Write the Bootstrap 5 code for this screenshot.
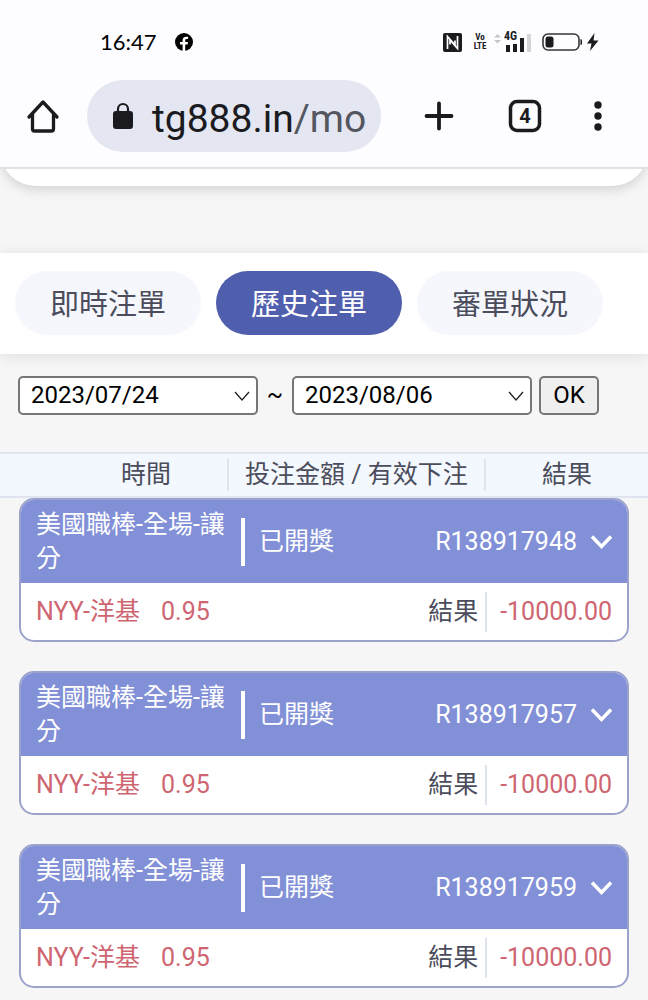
<!DOCTYPE html>
<html lang="zh-Hant">
<head>
<meta charset="utf-8">
<meta name="viewport" content="width=device-width, initial-scale=1">
<title>歷史注單</title>
<link href="https://cdn.jsdelivr.net/npm/bootstrap@5.3.0/dist/css/bootstrap.min.css" rel="stylesheet">
<style>
  body { background: #f6f6f6; color: #4b4d5c; font-family: Roboto, "Noto Sans CJK TC", sans-serif; font-size: 25px; line-height: 34px; }
  button { color: inherit; }
  svg { display: block; flex: none; }

  /* browser chrome */
  .chrome { background: #fdfdff; border-bottom: 2px solid #e0e2ea; color: #1b1b1f; padding-bottom: 15px; }
  .status { height: 80px; padding: 4px 48px 0 100px; }
  .clock { font: 22px/24px Lato, sans-serif; color: #000; }
  .volte { font: bold 9px/9px "Roboto Condensed", Roboto, sans-serif; text-align: center; width: 16px; margin: 0 4px 0 10px; }
  .net { font: bold 12px/12px "Roboto Condensed", Roboto, sans-serif; }
  .signal { position: relative; width: 28px; height: 20px; }
  .signal .net { position: absolute; left: 0; top: -2px; }
  .toolbar { padding: 0 45px 0 24px; }
  .tool { border: 0; background: none; padding: 0; }
  .omnibox { height: 72px; border: 0; border-radius: 36px; background: #e4e7f2; font-size: 39px; line-height: 46px; padding: 5px 15px 0 25px; gap: 18px; margin-left: 25px; min-width: 0; }
  .omnibox svg { margin-bottom: 5px; }
  .url-path { color: #54565f; }
  .actions { margin-left: 48px; gap: 50px; }

  /* page */
  .peek { height: 84px; overflow: hidden; }
  .peek-panel { height: 60px; margin-top: -43px; background: #fff; border-radius: 0 0 36px 36px; box-shadow: 0 4px 12px rgba(0,0,0,.14); }
  .tabs-bar { background: #fff; padding: 18px 15px 19px; gap: 15px; box-shadow: 0 2px 14px rgba(0,0,0,.1); }
  .tab-pill { border: 0; border-radius: 32px; height: 64px; padding: 4px 35px 0; font-size: 29px; line-height: 40px; background: #f6f7fd; white-space: nowrap; }
  .tab-pill.active { background: #505eae; color: #fff; }
  .range { padding: 22px 18px 37px; color: #000; font-size: 24px; }
  .range .form-select { width: 240px; height: 39px; border: 2px solid #767676; border-radius: 5px; color: #000; font-size: 24px; line-height: 32px; padding: 0 36px 1px 11px;
    background-image: url("data:image/svg+xml,%3Csvg xmlns='http://www.w3.org/2000/svg' viewBox='0 0 16 16'%3E%3Cpath d='M1 4l7 8 7-8' fill='none' stroke='%23222' stroke-width='1.3'/%3E%3C/svg%3E");
    background-size: 16px 16px; background-position: right 6px center; }
  .tilde { width: 34px; text-align: center; padding-bottom: 2px; }
  .ok { width: 60px; height: 39px; border: 2px solid #767676; border-radius: 5px; background: #efefef; padding: 0 0 1px; margin-left: 7px; line-height: 32px; }

  .cols { background: #f3f7fe; border-top: 2px solid #e0e4f1; border-bottom: 2px solid #e0e4f1; height: 46px; }
  .cols > div { text-align: center; white-space: nowrap; line-height: 32px; }
  .c-time { width: 35%; padding-left: 65px; }
  .c-stake { width: 40%; border: solid #dfe3f0; border-width: 0 2px; }
  .c-result { width: 25%; }

  .bets { padding: 0 19px 29px; gap: 29px; }
  .bet { border: 2px solid #9ca3cb; border-radius: 15px; overflow: hidden; background: #fff; height: 144px; }
  .bet-head { background: #8290d7; color: #fff; height: 83px; padding: 0 10px 0 15px; }
  .league { width: 205px; line-height: 34px; }
  .bar { width: 4px; height: 48px; background: #fff; margin-right: 14px; }
  .bet-body { height: 57px; padding: 1px 15px 0; }
  .odds { margin-left: 21px; }
  .loss { color: #ce6571; }
  .sum { border-left: 2px solid #dfe3f0; height: 40px; line-height: 40px; padding-left: 13px; margin-left: 7px; }
</style>
</head>
<body>

<header class="chrome">
  <div class="status d-flex align-items-center justify-content-between">
    <div class="d-flex align-items-center">
      <span class="clock">16:47</span>
      <svg class="ms-3" width="22" height="20" viewBox="0 0 22 20"><circle cx="11" cy="10" r="9" fill="#000"/><path d="M9.600 19v-6.400H7V10h2.600V8.300q0-3.600 3.500-3.600h2v2.400h-1.500q-1.400 0-1.400 1.300V10h2.800l-.4 2.600h-2.400V19z" fill="#fff"/></svg>
    </div>
    <div class="d-flex align-items-center">
      <svg width="19" height="19" viewBox="0 0 19 19"><rect width="19" height="19" rx="2" fill="#1b1b1f"/><path d="M4.500 16V3.500L12 12V7.500M14.500 3v12.500L7 7v4.500" fill="none" stroke="#fff" stroke-width="1.700"/></svg>
      <div class="volte">Vo<br>LTE</div>
      <svg width="12" height="20" viewBox="0 0 12 20"><path d="M2 5.500 5.500 2l3.500 3.500zM2 8h7l-3.500 3.500z" fill="#c6c6ca"/></svg>
      <div class="signal">
        <svg width="28" height="20" viewBox="0 0 28 20"><path d="M2 13h4v7H2zM9 12h4v8H9zM16 6h4v14h-4z" fill="#1b1b1f"/><path d="M23 2h4v18h-4z" fill="#d5d5d9"/></svg>
        <span class="net">4G</span>
      </div>
      <svg class="ms-2" width="60" height="20" viewBox="0 0 60 20"><rect x="3" y="2" width="36" height="16" rx="5" fill="none" stroke="#36363a" stroke-width="1.600"/><rect x="5.500" y="4.500" width="8" height="11" rx="2.500" fill="#1b1b1f"/><path d="M40.500 7q1.500 0 1.500 1.500v3q0 1.500-1.500 1.500z" fill="#1b1b1f"/><path d="M54.500 1 47 11.500h4.500L50 19l8.500-10.500H53.500z" fill="#1b1b1f"/></svg>
    </div>
  </div>
  <div class="toolbar d-flex align-items-center">
    <button class="tool" aria-label="首頁"><svg width="38" height="38" viewBox="0 0 38 38" fill="none" stroke="#1b1b1f" stroke-width="3.300" stroke-linejoin="round" stroke-linecap="round"><path d="M5 20 19 5l14 15M8.500 17.500V32q0 2 2 2h17q2 0 2-2V17.500"/></svg></button>
    <button class="omnibox d-flex align-items-center flex-grow-1">
      <svg width="22" height="28" viewBox="0 0 22 28"><rect x="1" y="9" width="20" height="18" rx="3" fill="#1b1b1f"/><path d="M6 10V7a5 5 0 0 1 10 0v3" fill="none" stroke="#1b1b1f" stroke-width="2.200"/></svg>
      <span class="text-nowrap">tg888.in<span class="url-path">/mo</span></span>
    </button>
    <div class="actions d-flex align-items-center">
      <button class="tool" aria-label="新分頁"><svg width="20" height="34" viewBox="0 0 20 34" overflow="visible"><path d="M10 4.500v25M-2.500 17h25" stroke="#1b1b1f" stroke-width="3.800" stroke-linecap="round"/></svg></button>
      <button class="tool ms-2" aria-label="分頁"><svg width="36" height="36" viewBox="0 0 36 36"><rect x="3.500" y="3.500" width="29" height="29" rx="6.500" fill="none" stroke="#1b1b1f" stroke-width="3.500"/><text x="18" y="25" text-anchor="middle" font-family="Roboto" font-weight="700" font-size="20" fill="#1b1b1f">4</text></svg></button>
      <button class="tool" aria-label="選單"><svg width="10" height="34" viewBox="0 0 10 34" fill="#1b1b1f"><circle cx="5" cy="6" r="3.700"/><circle cx="5" cy="17" r="3.700"/><circle cx="5" cy="28" r="3.700"/></svg></button>
    </div>
  </div>
</header>

<main>
  <div class="peek"><div class="peek-panel"></div></div>

  <nav class="tabs-bar d-flex">
    <button class="tab-pill">即時注單</button>
    <button class="tab-pill active">歷史注單</button>
    <button class="tab-pill">審單狀況</button>
  </nav>

  <form class="range d-flex align-items-center">
    <select class="form-select" aria-label="開始日期"><option>2023/07/24</option></select>
    <span class="tilde">~</span>
    <select class="form-select" aria-label="結束日期"><option>2023/08/06</option></select>
    <button type="button" class="ok">OK</button>
  </form>

  <div class="cols d-flex align-items-center">
    <div class="c-time">時間</div>
    <div class="c-stake">投注金額 / 有效下注</div>
    <div class="c-result">結果</div>
  </div>

  <section class="bets d-flex flex-column">
    <article class="bet">
      <div class="bet-head d-flex align-items-center">
        <div class="league">美國職棒-全場-讓分</div><div class="bar"></div><span>已開獎</span>
        <span class="ms-auto">R138917948</span>
        <button class="tool ms-2" aria-label="展開"><svg width="32" height="24" viewBox="0 0 32 24"><path d="m7 6.500 9.500 10 9.500-10" fill="none" stroke="#fff" stroke-width="3.500"/></svg></button>
      </div>
      <div class="bet-body d-flex align-items-center">
        <span class="loss">NYY-洋基</span><span class="loss odds">0.95</span>
        <span class="ms-auto">結果</span><span class="loss sum">-10000.00</span>
      </div>
    </article>
    <article class="bet">
      <div class="bet-head d-flex align-items-center">
        <div class="league">美國職棒-全場-讓分</div><div class="bar"></div><span>已開獎</span>
        <span class="ms-auto">R138917957</span>
        <button class="tool ms-2" aria-label="展開"><svg width="32" height="24" viewBox="0 0 32 24"><path d="m7 6.500 9.500 10 9.500-10" fill="none" stroke="#fff" stroke-width="3.500"/></svg></button>
      </div>
      <div class="bet-body d-flex align-items-center">
        <span class="loss">NYY-洋基</span><span class="loss odds">0.95</span>
        <span class="ms-auto">結果</span><span class="loss sum">-10000.00</span>
      </div>
    </article>
    <article class="bet">
      <div class="bet-head d-flex align-items-center">
        <div class="league">美國職棒-全場-讓分</div><div class="bar"></div><span>已開獎</span>
        <span class="ms-auto">R138917959</span>
        <button class="tool ms-2" aria-label="展開"><svg width="32" height="24" viewBox="0 0 32 24"><path d="m7 6.500 9.500 10 9.500-10" fill="none" stroke="#fff" stroke-width="3.500"/></svg></button>
      </div>
      <div class="bet-body d-flex align-items-center">
        <span class="loss">NYY-洋基</span><span class="loss odds">0.95</span>
        <span class="ms-auto">結果</span><span class="loss sum">-10000.00</span>
      </div>
    </article>
  </section>
</main>

<script src="https://cdn.jsdelivr.net/npm/bootstrap@5.3.0/dist/js/bootstrap.bundle.min.js"></script>
</body>
</html>
